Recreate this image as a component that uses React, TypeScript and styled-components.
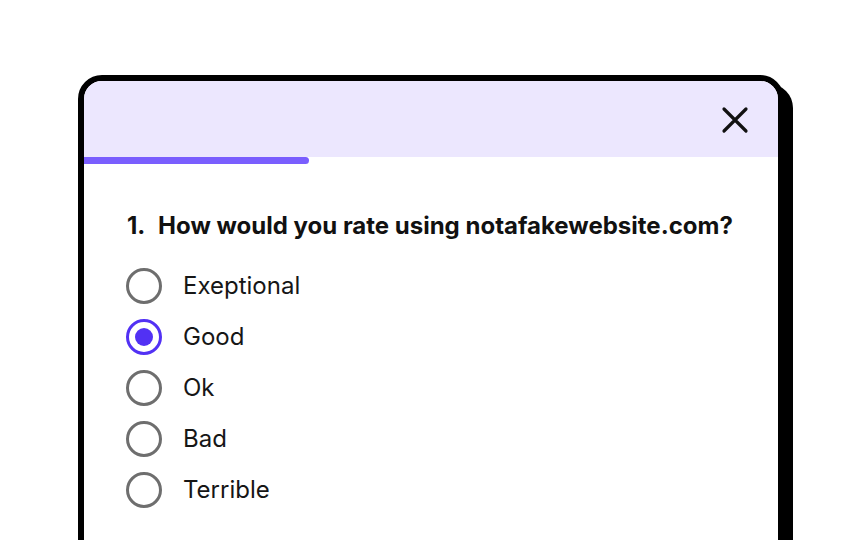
import React, { useState } from "react";
import styled, { createGlobalStyle } from "styled-components";

const Global = createGlobalStyle`
  html, body { margin: 0; padding: 0; background: #ffffff; }
  body { font-family: Inter, "Noto Sans", sans-serif; overflow: hidden; }
`;

const Page = styled.div`
  width: 864px;
  height: 540px;
  padding: 75px 0 0 78px;
  box-sizing: border-box;
  overflow: hidden;
`;

const Card = styled.div`
  width: 706px;
  height: 520px;
  box-sizing: border-box;
  border: 6px solid #000;
  border-radius: 24px;
  box-shadow: 9px 9px 0 #000;
  background: #fff;
  overflow: hidden;
  display: flex;
  flex-direction: column;
`;

const Header = styled.div`
  height: 76px;
  background: #ece7fe;
  display: flex;
  align-items: center;
  justify-content: flex-end;
  padding-right: 29px;
`;

const CloseButton = styled.button`
  border: none;
  background: transparent;
  padding: 0;
  width: 28px;
  height: 28px;
  display: flex;
  align-items: center;
  justify-content: center;
  cursor: pointer;
  margin-top: 2px;
`;

const Track = styled.div`
  height: 7px;
  background: #fff;
`;

const Fill = styled.div`
  height: 100%;
  background: #7a5efe;
  border-radius: 0 4px 4px 0;
`;

const Body = styled.div`
  padding: 47px 0 0 43px;
  display: flex;
  flex-direction: column;
`;

const Question = styled.h2`
  margin: 0 0 19px 0;
  font-size: 24px;
  line-height: 30px;
  font-weight: 700;
  color: #111;
  letter-spacing: 0;
`;

const Num = styled.span`
  margin-right: 7px;
`;

const Options = styled.div`
  display: flex;
  flex-direction: column;
`;

const Option = styled.label`
  display: flex;
  align-items: center;
  height: 51px;
  gap: 21px;
  cursor: pointer;
  margin-left: -1px;
`;

const Radio = styled.span<{ $checked: boolean }>`
  width: 36px;
  height: 36px;
  box-sizing: border-box;
  border-radius: 50%;
  border: 3px solid ${(p) => (p.$checked ? "#5231f4" : "#6e6e6e")};
  display: flex;
  align-items: center;
  justify-content: center;
  flex-shrink: 0;
  &::after {
    content: "";
    width: 18px;
    height: 18px;
    border-radius: 50%;
    background: #5231f4;
    display: ${(p) => (p.$checked ? "block" : "none")};
  }
`;

const Label = styled.span`
  font-size: 24px;
  color: #161616;
  font-weight: 400;
`;

const options = ["Exeptional", "Good", "Ok", "Bad", "Terrible"];

export default function App() {
  const [value, setValue] = useState("Good");
  return (
    <>
      <Global />
      <Page>
        <Card>
          <Header>
            <CloseButton aria-label="Close">
              <svg width="28" height="28" viewBox="0 0 28 28" fill="none">
                <path d="M3 3L25 25M25 3L3 25" stroke="#111" strokeWidth="3.2" strokeLinecap="round" />
              </svg>
            </CloseButton>
          </Header>
          <Track>
            <Fill style={{ width: `${(225 / 694) * 100}%` }} />
          </Track>
          <Body>
            <Question>
              <Num>1.</Num> How would you rate using notafakewebsite.com?
            </Question>
            <Options>
              {options.map((o) => (
                <Option key={o} onClick={() => setValue(o)}>
                  <Radio $checked={value === o} />
                  <Label>{o}</Label>
                </Option>
              ))}
            </Options>
          </Body>
        </Card>
      </Page>
    </>
  );
}
